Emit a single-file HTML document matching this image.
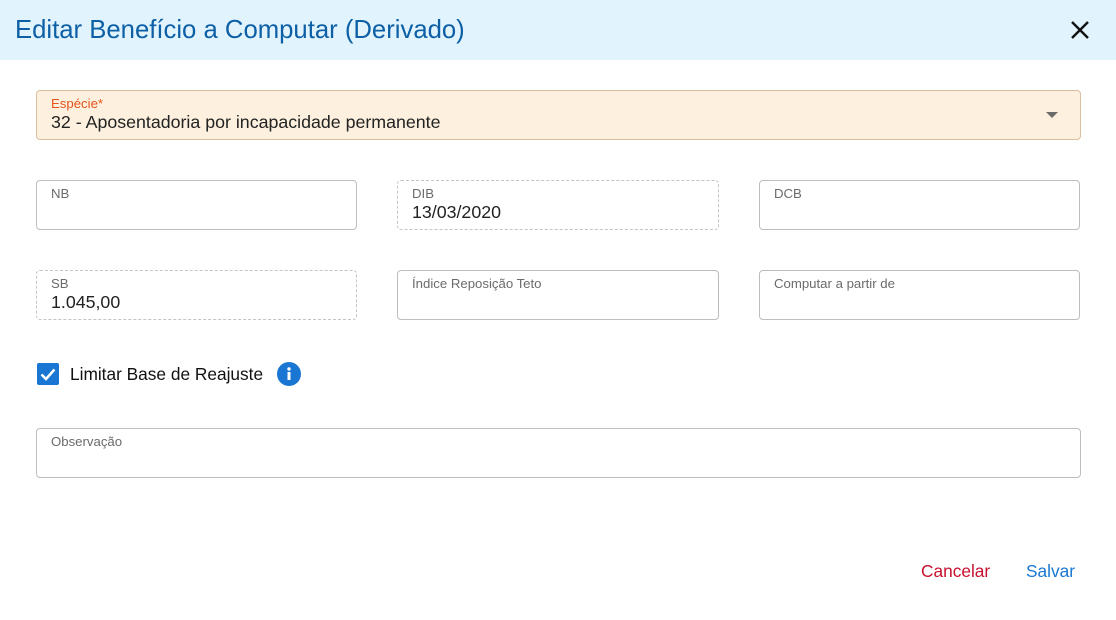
<!DOCTYPE html>
<html><head><meta charset="utf-8"><style>
*{box-sizing:border-box;margin:0;padding:0}
body{width:1116px;height:620px;background:#fff;font-family:"Liberation Sans",sans-serif;position:relative;overflow:hidden}
.hdr{position:absolute;left:0;top:0;width:1116px;height:60px;background:#e1f4fd}
.hdr h1{position:absolute;left:15px;top:16px;font-size:25.7px;font-weight:normal;color:#0d5fa6}
.x{position:absolute;left:1069px;top:19px}
.f{position:absolute;border:1px solid #bdbdbd;border-radius:4px;height:50px}
.f.d{border:1px dashed #c4c4c4}
.f .l{position:absolute;left:14px;top:5px;font-size:13.2px;color:#6b6b6b}
.f .v{position:absolute;left:14px;top:21px;font-size:17.8px;color:#222}
.sp{left:36px;top:90px;width:1045px;background:#fdf0de;border-color:#d9bfa0}
.sp .l{color:#e5531a}
.arr{position:absolute;right:22px;top:21px;width:0;height:0;border-left:6px solid transparent;border-right:6px solid transparent;border-top:6px solid #6b6b6b}
.btn{position:absolute;top:561px;font-size:17.3px}
</style></head><body>
<div class="hdr"><h1>Editar Benefício a Computar (Derivado)</h1>
<svg class="x" width="22" height="22" viewBox="0 0 22 22"><path d="M3 3L19 19M19 3L3 19" stroke="#111" stroke-width="2.4"/></svg></div>
<div class="f sp"><div class="l">Espécie*</div><div class="v">32 - Aposentadoria por incapacidade permanente</div><div class="arr"></div></div>
<div class="f" style="left:36px;top:180px;width:321px"><div class="l">NB</div></div>
<div class="f d" style="left:397px;top:180px;width:322px"><div class="l">DIB</div><div class="v">13/03/2020</div></div>
<div class="f" style="left:759px;top:180px;width:321px"><div class="l">DCB</div></div>
<div class="f d" style="left:36px;top:270px;width:321px"><div class="l">SB</div><div class="v">1.045,00</div></div>
<div class="f" style="left:397px;top:270px;width:322px"><div class="l">Índice Reposição Teto</div></div>
<div class="f" style="left:759px;top:270px;width:321px"><div class="l">Computar a partir de</div></div>
<svg style="position:absolute;left:37px;top:363px" width="22" height="22" viewBox="0 0 22 22"><rect width="22" height="22" rx="2" fill="#1976d2"/><path d="M4.5 11.5L9 16L17.5 6.5" stroke="#fff" stroke-width="2.5" fill="none"/></svg>
<div style="position:absolute;left:70px;top:364px;font-size:17.3px;color:#111">Limitar Base de Reajuste</div>
<svg style="position:absolute;left:277px;top:362px" width="24" height="24" viewBox="0 0 24 24"><circle cx="12" cy="12" r="12" fill="#1976d2"/><circle cx="12" cy="7" r="1.7" fill="#fff"/><rect x="10.5" y="10" width="3" height="8" fill="#fff"/></svg>
<div class="f" style="left:36px;top:428px;width:1045px"><div class="l">Observação</div></div>
<div class="btn" style="left:921px;color:#c8102e">Cancelar</div>
<div class="btn" style="left:1026px;color:#1976d2">Salvar</div>
</body></html>
